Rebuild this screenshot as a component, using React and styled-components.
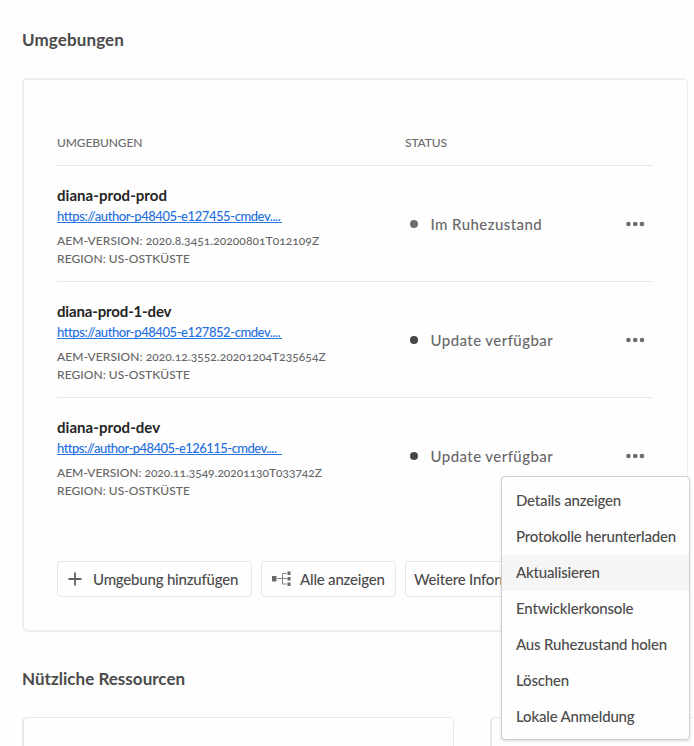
import React from "react";
import styled, { createGlobalStyle } from "styled-components";

const GlobalStyle = createGlobalStyle`
  * { box-sizing: border-box; }
  body {
    margin: 0;
    background: #fefefe;
    color: #4b4b4b;
    font-family: Lato, "Noto Sans", sans-serif;
  }
`;

const Page = styled.main`
  position: relative;
  width: 694px;
  height: 746px;
  padding: 28px 0 0 22px;
  overflow: hidden;
`;

const Heading = styled.h2`
  margin: 0;
  height: 24px;
  font-size: 17px;
  line-height: 24px;
  font-weight: 700;
  letter-spacing: ${(p) => p.$tracking || "0.12px"};
`;

const Card = styled.section`
  width: 666px;
  height: 554px;
  margin: 26px 0 35px;
  padding: 44px 34px 0 33px;
  border: 2px solid #eeeeee;
  border-right-width: 1px;
  border-radius: 5px;
`;

const columns = "348px 1fr auto";

const TableHead = styled.div`
  display: grid;
  grid-template-columns: ${columns};
  height: 42px;
  padding-top: 9px;
  border-bottom: 1px solid #e6e6e6;
  color: #6c6c6c;
  font-size: 12px;
  line-height: 20px;
  font-weight: 500;
  letter-spacing: -0.1px;
`;

const Row = styled.div`
  display: grid;
  grid-template-columns: ${columns};
  height: 116px;
  padding-top: 19px;
  border-bottom: 1px solid ${(p) => (p.$last ? "transparent" : "#e8e8e8")};
`;

const Name = styled.div`
  height: 20px;
  color: #242424;
  font-size: 15px;
  line-height: 20px;
  font-weight: 700;
  letter-spacing: ${(p) => p.$tracking || "0.05px"};
`;

const EnvLink = styled.a`
  display: block;
  width: 225px;
  height: 16px;
  margin: 2px 0 9px;
  border-bottom: 1px solid #2b77e0;
  color: #1f6fe0;
  font-size: 13px;
  line-height: 19px;
  font-weight: 500;
  letter-spacing: ${(p) => p.$tracking || "-0.43px"};
  text-decoration: none;
  white-space: nowrap;
`;

const Meta = styled.div`
  height: 18px;
  color: #666666;
  font-size: 12px;
  line-height: 18px;
  font-weight: 500;
  font-variant-numeric: oldstyle-nums;
  letter-spacing: ${(p) => p.$tracking || "0.06px"};
  white-space: nowrap;
`;

const Status = styled.div`
  display: flex;
  align-items: center;
  gap: 13px;
  height: 20px;
  margin-top: 29px;
  padding-left: 4.5px;
  color: #686868;
  font-size: 15px;
  line-height: 20px;
  font-weight: 500;
  letter-spacing: 0.43px;
`;

const Dot = styled.span`
  width: 8px;
  height: 8px;
  border-radius: 50%;
  background: ${(p) => (p.$idle ? "#6e6e6e" : "#464646")};
`;

const MoreButton = styled.button`
  width: 19px;
  height: 6px;
  margin: 35.5px 8px 0 0;
  padding: 0;
  border: 0;
  background: none;
  svg { display: block; }
`;

const Actions = styled.div`
  display: flex;
  gap: 9px;
  margin-top: 47px;
`;

const Button = styled.button`
  display: flex;
  align-items: center;
  flex: none;
  width: ${(p) => p.$width};
  height: 36px;
  padding: 0 0 1px ${(p) => p.$indent};
  gap: ${(p) => p.$gap || "0"};
  border: 1px solid #e6e6e6;
  border-radius: 4px;
  background: #fefefe;
  color: #4b4b4b;
  font: inherit;
  font-size: 15px;
  line-height: 20px;
  font-weight: 500;
  letter-spacing: -0.2px;
  white-space: nowrap;
`;

const Resources = styled.div`
  display: flex;
  gap: 36px;
  margin-top: 26px;
`;

const ResourceCard = styled.div`
  flex: none;
  width: 432px;
  height: 120px;
  border: 1px solid #e8e8e8;
  border-left-width: 2px;
  border-radius: 5px;
`;

const Menu = styled.ul`
  position: absolute;
  left: 501px;
  top: 476px;
  width: 189px;
  height: 264px;
  margin: 0;
  padding: 6px 0;
  border: 1px solid #cfcfcf;
  border-radius: 4px;
  background: #fefefe;
  box-shadow: 0 1px 3px rgba(0, 0, 0, 0.14);
  list-style: none;
`;

const MenuItem = styled.li`
  height: 36px;
  padding-left: 14px;
  background: ${(p) => (p.$active ? "#f5f5f5" : "transparent")};
  font-size: 15px;
  line-height: 35px;
  font-weight: 500;
  letter-spacing: -0.18px;
  white-space: nowrap;
`;

const PlusIcon = () => (
  <svg width="14" height="14" viewBox="0 0 14 14" fill="none" stroke="#606060" strokeWidth="1.8">
    <path d="M7 .5v13M.5 7h13" />
  </svg>
);

const TreeIcon = () => (
  <svg width="19" height="16" viewBox="0 0 19 16">
    <path d="M5 7.5h10M14.5 2.5h-4v10.5h4" fill="none" stroke="#858585" />
    <path d="M0 5h4.5v5.5H0zM15.5 .5h3V4h-3zM15.5 6h3v3.5h-3zM15.5 11.5h3V15h-3z" fill="#6a6a6a" />
  </svg>
);

const MoreIcon = () => (
  <svg width="19" height="6" viewBox="0 0 19 6" fill="#6c6c6c">
    <circle cx="2.4" cy="3" r="2.3" />
    <circle cx="9.2" cy="3" r="2.3" />
    <circle cx="16" cy="3" r="2.3" />
  </svg>
);

const environments = [
  { name: "diana-prod-prod", url: "https://author-p48405-e127455-cmdev....", version: "2020.8.3451.20200801T012109Z", status: "Im Ruhezustand", idle: true },
  { name: "diana-prod-1-dev", nameTracking: "-0.15px", url: "https://author-p48405-e127852-cmdev....", version: "2020.12.3552.20201204T235654Z", status: "Update verfügbar" },
  { name: "diana-prod-dev", url: "https://author-p48405-e126115-cmdev....", urlTracking: "-0.53px", version: "2020.11.3549.20201130T033742Z", versionTracking: "-0.03px", status: "Update verfügbar" },
];

const menuItems = [
  "Details anzeigen",
  "Protokolle herunterladen",
  "Aktualisieren",
  "Entwicklerkonsole",
  "Aus Ruhezustand holen",
  "Löschen",
  "Lokale Anmeldung",
];

export default function App() {
  return (
    <Page>
      <GlobalStyle />
      <Heading>Umgebungen</Heading>
      <Card>
        <TableHead>
          <span>UMGEBUNGEN</span>
          <span>STATUS</span>
        </TableHead>
        {environments.map((env, i) => (
          <Row key={env.name} $last={i === environments.length - 1}>
            <div>
              <Name $tracking={env.nameTracking}>{env.name}</Name>
              <EnvLink href="#" $tracking={env.urlTracking}>{env.url}</EnvLink>
              <Meta $tracking={env.versionTracking}>AEM-VERSION: {env.version}</Meta>
              <Meta>REGION: US-OSTKÜSTE</Meta>
            </div>
            <Status>
              <Dot $idle={env.idle} />
              {env.status}
            </Status>
            <MoreButton aria-label="Mehr">
              <MoreIcon />
            </MoreButton>
          </Row>
        ))}
        <Actions>
          <Button $width="195px" $indent="10px" $gap="11px">
            <PlusIcon />
            Umgebung hinzufügen
          </Button>
          <Button $width="135px" $indent="10px" $gap="9px">
            <TreeIcon />
            Alle anzeigen
          </Button>
          <Button $width="180px" $indent="8px">Weitere Informationen</Button>
        </Actions>
      </Card>
      <Heading $tracking="0.02px">Nützliche Ressourcen</Heading>
      <Resources>
        <ResourceCard />
        <ResourceCard />
      </Resources>
      <Menu>
        {menuItems.map((item) => (
          <MenuItem key={item} $active={item === "Aktualisieren"}>
            {item}
          </MenuItem>
        ))}
      </Menu>
    </Page>
  );
}
